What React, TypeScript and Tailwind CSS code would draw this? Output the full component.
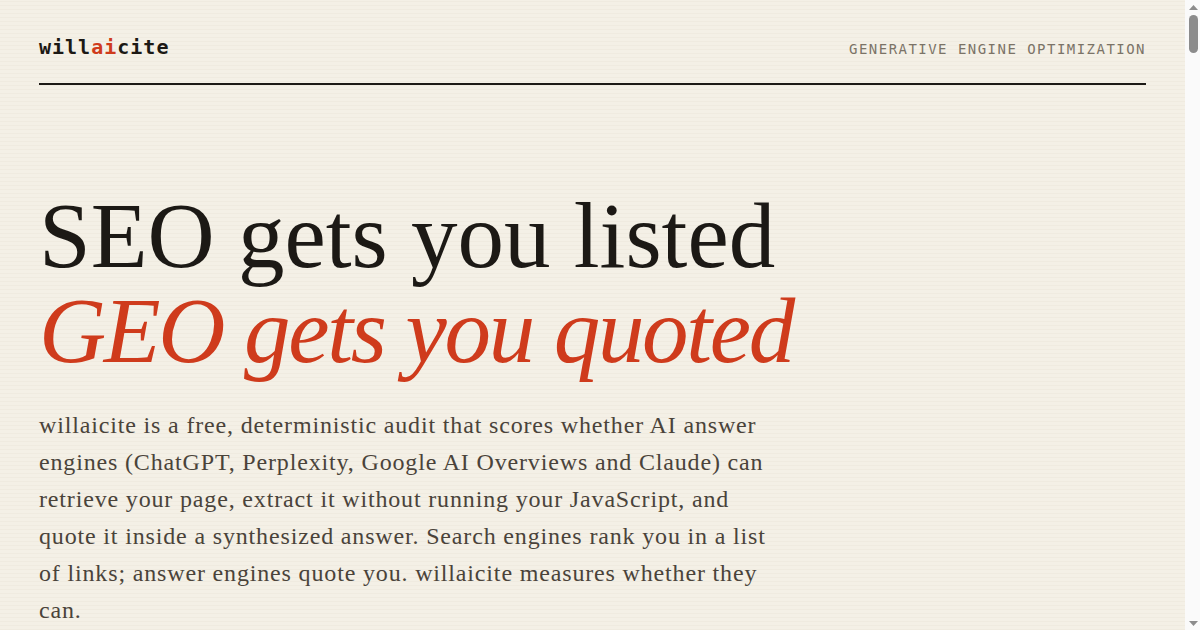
import React from 'react';

const serif = "font-['Liberation_Serif','Times_New_Roman',serif]";
const mono = "font-['DejaVu_Sans_Mono','Liberation_Mono',monospace]";

function Header() {
  return (
    <header className="flex items-baseline justify-between border-b-2 border-[#1c1915] pt-[33px] pb-[22px]">
      <a href="#" className={`${mono} text-[20px] leading-[28px] font-bold tracking-[0.05em] text-[#1c1915]`}>
        will<span className="text-[#cf3b1c]">ai</span>cite
      </a>
      <span className={`${mono} text-[14px] leading-[18px] tracking-[0.105em] text-[#7b7367]`}>
        GENERATIVE ENGINE OPTIMIZATION
      </span>
    </header>
  );
}

function Hero() {
  return (
    <section>
      <h1 className={`${serif} mt-[103px] text-[93px] leading-[95px] font-normal text-[#1c1915]`}>
        SEO gets you listed
        <br />
        <em className="tracking-[-0.025em] text-[#cf3b1c]">GEO gets you quoted</em>
      </h1>
      <p className={`${serif} mt-[29px] text-[24px] leading-[37px] tracking-[0.035em] text-[#4a433a] whitespace-nowrap`}>
        willaicite is a free, deterministic audit that scores whether AI answer
        <br />
        engines (ChatGPT, Perplexity, Google AI Overviews and Claude) can
        <br />
        retrieve your page, extract it without running your JavaScript, and
        <br />
        quote it inside a synthesized answer. Search engines rank you in a list
        <br />
        of links; answer engines quote you. willaicite measures whether they
        <br />
        can.
      </p>
    </section>
  );
}

// window scrollbar strip on the right edge
function Scrollbar() {
  return (
    <aside className="flex w-[15px] shrink-0 flex-col items-center bg-[#fafafa]">
      <svg width="9" height="5" viewBox="0 0 9 5" className="mt-[5px] ml-[1px] block">
        <path d="M4.5 0L9 5H0z" fill="#8c8c8c" />
      </svg>
      <div className="mt-[5px] ml-[1px] h-[38px] w-[9px] rounded-full bg-[#8c8c8c]" />
      <div className="flex-1" />
      <svg width="9" height="5" viewBox="0 0 9 5" className="mb-[4px] ml-[1px] block">
        <path d="M0 0H9L4.5 5z" fill="#8c8c8c" />
      </svg>
    </aside>
  );
}

export default function App() {
  return (
    <div className="flex h-screen overflow-hidden bg-[#f4f0e6]">
      <main className="flex-1 overflow-hidden px-[39px] bg-[repeating-linear-gradient(0deg,rgba(120,100,60,0.035)_0px,rgba(120,100,60,0.035)_1px,transparent_1px,transparent_4px)]">
        <Header />
        <Hero />
      </main>
      <Scrollbar />
    </div>
  );
}
